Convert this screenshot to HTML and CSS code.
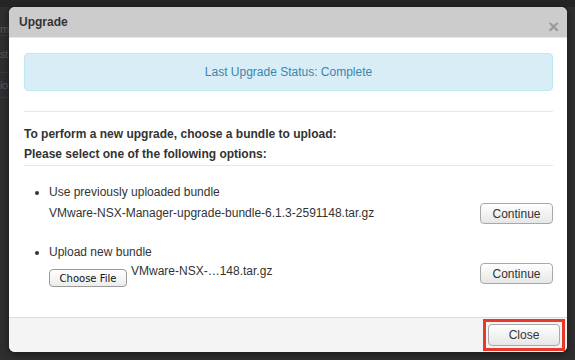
FILE: index.html
```html
<!DOCTYPE html>
<html>
<head>
<meta charset="utf-8">
<link rel="stylesheet" href="styles.css">
</head>
<body>
<div class="page">
  <div class="topbar"></div>
  <div class="side">
    <div class="side-row r1"><span>m</span></div>
    <div class="side-row r2"><span>st</span></div>
    <div class="side-row r3"><span>io</span></div>
  </div>
</div>
<div class="modal">
  <div class="modal-header">
    <span class="modal-title">Upgrade</span>
    <span class="modal-x">×</span>
  </div>
  <div class="modal-body">
    <div class="alert">Last Upgrade Status: Complete</div>
    <hr class="rule rule-1">
    <div class="intro">
      <div>To perform a new upgrade, choose a bundle to upload:</div>
      <div>Please select one of the following options:</div>
    </div>
    <hr class="rule rule-2">
    <div class="options">
      <div class="option opt-1">
        <div class="option-text">
          <div class="bullet-line">Use previously uploaded bundle</div>
          <div class="plain-line">VMware-NSX-Manager-upgrade-bundle-6.1.3-2591148.tar.gz</div>
        </div>
        <button class="btn btn-continue">Continue</button>
      </div>
      <div class="option opt-2">
        <div class="option-text">
          <div class="bullet-line">Upload new bundle</div>
          <div class="file-line">
            <button class="btn-file">Choose File</button>
            <span class="file-name">VMware-NSX-…148.tar.gz</span>
          </div>
        </div>
        <button class="btn btn-continue">Continue</button>
      </div>
    </div>
  </div>
  <div class="modal-footer">
    <span class="highlight"><button class="btn btn-close">Close</button></span>
  </div>
</div>
</body>
</html>
```

FILE: styles.css
```css
html, body {
  margin: 0;
  padding: 0;
}
body {
  width: 575px;
  height: 360px;
  background: #2f2f2f;
  font-family: "Liberation Sans", Arial, sans-serif;
  color: #333;
  overflow: hidden;
  position: relative;
}
.page {
  display: flex;
  flex-direction: column;
}
.topbar {
  height: 7px;
  background: #252525;
}
.side {
  width: 9px;
  display: flex;
  flex-direction: column;
}
.side-row {
  display: flex;
  justify-content: flex-start;
  white-space: nowrap;
  color: #5a5a5a;
  font-size: 11px;
  letter-spacing: -0.5px;
  border-bottom: 1px solid #3a3a3a;
}
.r1 { height: 28px; align-items: flex-end; }
.r2 { height: 36px; align-items: center; }
.r3 { height: 24px; align-items: center; }

.modal {
  position: absolute;
  left: 9px;
  top: 7px;
  width: 558px;
  height: 345px;
  background: #fff;
  border-radius: 6px;
  box-shadow: 0 2px 8px rgba(0,0,0,0.5);
  display: flex;
  flex-direction: column;
  overflow: hidden;
}
.modal-header {
  height: 30px;
  background: #cccccc;
  border-bottom: 1px solid #e6e6e6;
  display: flex;
  align-items: center;
  justify-content: space-between;
  padding: 0 8px 0 10px;
  flex: none;
}
.modal-title {
  font-weight: bold;
  font-size: 12px;
  color: #333;
}
.modal-x {
  font-weight: bold;
  font-size: 19px;
  color: #999;
  line-height: 1;
  margin-top: 9px;
}
.modal-body {
  flex: 1;
  padding: 15px 14px 0 15px;
  font-size: 12px;
}
.alert {
  height: 36px;
  background: #d9edf7;
  border: 1px solid #bce8f1;
  border-radius: 4px;
  color: #3a87ad;
  display: flex;
  align-items: center;
  justify-content: center;
}
.rule {
  border: 0;
  border-top: 1px solid #e8e8e8;
  margin: 0;
}
.rule-1 { margin-top: 20px; }
.intro {
  margin-top: 12px;
  font-weight: bold;
  line-height: 20px;
}
.rule-2 { margin-top: 1px; }
.options {
  margin-top: 16px;
  display: flex;
  flex-direction: column;
  gap: 18px;
}
.option {
  display: flex;
  justify-content: space-between;
  align-items: flex-start;
}
.option-text {
  padding-left: 25px;
  line-height: 21px;
}
.bullet-line {
  position: relative;
}
.bullet-line::before {
  content: "";
  position: absolute;
  left: -14px;
  top: 9px;
  width: 4px;
  height: 4px;
  border-radius: 50%;
  background: #333;
}
.file-line {
  display: flex;
  align-items: flex-start;
}
.btn-file {
  margin: 6px 0 0 0;
  height: 18px;
  width: 78px;
  padding: 0;
  font-family: "DejaVu Sans", sans-serif;
  font-size: 10px;
  color: #111;
  background: linear-gradient(#ffffff, #ececec);
  border: 1px solid #9a9a9a;
  border-radius: 4px;
}
.file-name {
  margin-left: 4px;
  line-height: 17px;
}
.btn {
  font-family: "Liberation Sans", Arial, sans-serif;
  font-size: 12px;
  color: #333;
  background: linear-gradient(#ffffff, #e6e6e6);
  border: 1px solid #a8a8a8;
  border-radius: 4px;
  padding: 0;
}
.btn-continue {
  width: 73px;
  height: 21px;
  margin-top: 21px;
}
.modal-footer {
  flex: none;
  height: 35px;
  box-sizing: border-box;
  border-top: 1px solid #dcdcdc;
  background: #f4f4f4;
  display: flex;
  justify-content: flex-end;
  align-items: flex-start;
  padding: 1px 2px 0 0;
}
.highlight {
  display: flex;
  border: 3px solid #e8382b;
  padding: 2px;
}
.btn-close {
  width: 72px;
  height: 22px;
}
```
